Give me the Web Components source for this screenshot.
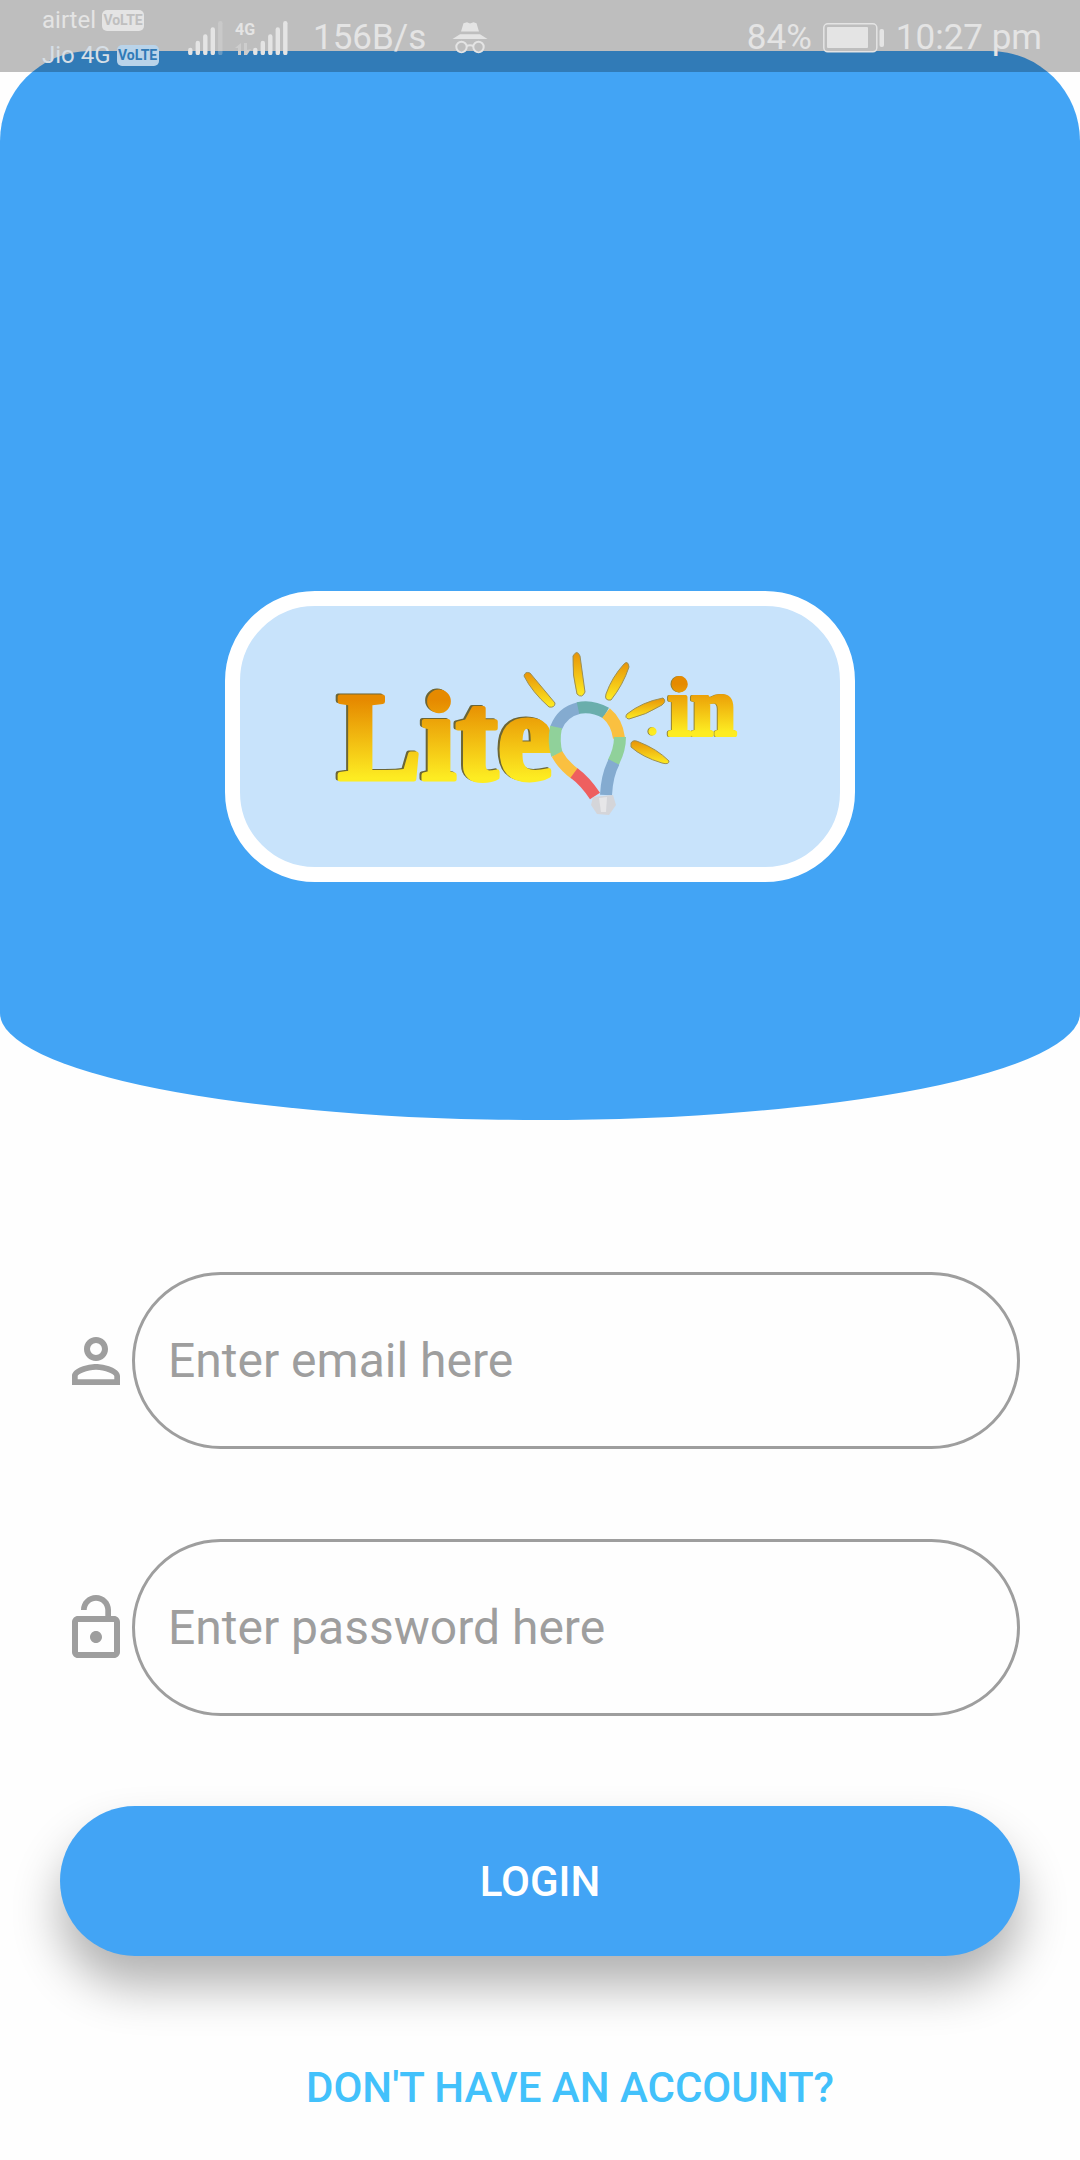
<!DOCTYPE html>
<html lang="en">
<head>
<meta charset="utf-8">
<meta name="viewport" content="width=device-width, initial-scale=1">
<title>Lite.in</title>
<style>
  body { margin: 0; background: #fefefe; font-family: Roboto, "Liberation Sans", sans-serif; }
</style>
</head>
<body>
<login-page></login-page>

<script>
const define = (name, html, setup) => {
  const template = document.createElement('template');
  template.innerHTML = html;
  customElements.define(name, class extends HTMLElement {
    constructor() {
      super();
      this.attachShadow({ mode: 'open' }).append(template.content.cloneNode(true));
    }
    connectedCallback() { if (setup) setup(this, this.shadowRoot); }
  });
};

/* Signal strength bars; level = number of lit bars */
define('signal-bars', `
  <style>
    :host { display: block; }
    svg { display: block; }
    .off { opacity: .3; }
  </style>
  <svg width="35" height="34" viewBox="0 0 35 34" stroke="currentColor" stroke-width="4.4" stroke-linecap="round">
    <path d="M2.3 29v3"/><path d="M9.8 22v10"/><path d="M17.3 15.500v16.500"/><path d="M24.800 8.500v23.500"/><path d="M32.300 2.300v29.700"/>
  </svg>`, (host, root) => {
    const level = Number(host.getAttribute('level'));
    root.querySelectorAll('path').forEach((bar, i) => bar.classList.toggle('off', i >= level));
  });

define('carrier-line', `
  <style>
    :host { display: flex; align-items: center; gap: 6px; height: 35px; font-size: 24px; line-height: 35px; }
    .badge { box-sizing: border-box; width: 42px; height: 21px; border-radius: 5px; background: currentColor; text-align: center; }
    .badge span { display: block; font-size: 14px; line-height: 21px; font-weight: 700; color: var(--cut, #bfbfbf); }
  </style>
  <slot></slot><div class="badge"><span>VoLTE</span></div>`);

define('status-bar', `
  <style>
    :host { position: absolute; inset: 0 0 auto 0; box-sizing: border-box; height: 72px; padding: 3px 38px 0 42px;
      display: flex; align-items: center; justify-content: space-between;
      background: rgba(0,0,0,.25); color: #e4e4e4; font-size: 35px; line-height: 42px; }
    .side { display: flex; align-items: center; }
    .carriers { width: 146px; }
    .jio { --cut: #307ab7; color: #b9d3e9; }
    .jio span { color: #d6dfe6; }
    .network { width: 18px; margin-left: 12px; font-size: 16px; line-height: 18px; font-weight: 700; }
    .network svg { display: block; }
    .speed { margin: 0 26px 0 25px; }
    .right { gap: 11px; }
    svg { display: block; }
  </style>
  <div class="side">
    <div class="carriers">
      <carrier-line>airtel</carrier-line>
      <carrier-line class="jio"><span>Jio 4G</span></carrier-line>
    </div>
    <signal-bars level="4"></signal-bars>
    <div class="network">4G
      <svg width="18" height="16" viewBox="0 0 18 16" fill="#cdcdcd"><path d="M6 4v12H3v-7H0zM9 4h3v7l4-1-4 6H9z"/></svg>
    </div>
    <signal-bars level="5"></signal-bars>
    <div class="speed">156B/s</div>
    <svg width="36" height="32" viewBox="0 0 36 32" fill="currentColor">
      <path d="M9 9.500 11.500 1.200 15 .2 18 1.500 21.500 .2 24.500 1.200 27 9.500z"/>
      <path d="M.5 17 8 12.200h20L35.500 17z"/>
      <g fill="none" stroke="currentColor" stroke-width="2"><circle cx="9.500" cy="25" r="5.200"/><circle cx="26.500" cy="25" r="5.200"/><path d="M14.500 24q3.500-1.500 7 0"/></g>
    </svg>
  </div>
  <div class="side right">
    <div>84%</div>
    <svg width="62" height="30" viewBox="0 0 62 30">
      <rect x=".8" y=".8" width="53" height="28" rx="4" fill="none" stroke="currentColor" stroke-width="1.500"/>
      <rect x="4" y="4" width="41" height="21" rx="1" fill="currentColor"/>
      <rect x="56.500" y="6" width="4.500" height="18" rx="2" fill="currentColor"/>
    </svg>
    <div>10:27 pm</div>
  </div>`);

define('brand-logo', `
  <style>
    :host { display: block; }
    svg { display: block; width: 100%; height: auto; }
    text { font-family: "Liberation Serif", serif; font-weight: 700; stroke-linejoin: round; filter: drop-shadow(-2px -1px 0 #6c6636); }
    .tld { filter: drop-shadow(-1px 0 0 #8f8138); }
  </style>
  <svg viewBox="240 606 600 261" role="img" aria-label="Lite.in">
    <defs>
      <linearGradient id="word" gradientUnits="userSpaceOnUse" x1="0" y1="700" x2="0" y2="778"><stop offset="0" stop-color="#e68a00"/><stop offset="1" stop-color="#fdec22"/></linearGradient>
      <linearGradient id="tld" gradientUnits="userSpaceOnUse" x1="0" y1="684" x2="0" y2="732"><stop offset="0" stop-color="#e68a00"/><stop offset="1" stop-color="#fdec22"/></linearGradient>
      <linearGradient id="ray" x1="0" y1="0" x2="0" y2="1"><stop offset="0" stop-color="#e89308"/><stop offset="1" stop-color="#fdec22"/></linearGradient>
    </defs>
    <text x="338" y="779" font-size="125" fill="url(#word)" stroke="url(#word)" stroke-width="5">Lite</text>
    <g fill="none" stroke-width="12">
      <path stroke="#84abd0" d="M556 728Q562 712 579 708"/>
      <path stroke="#6aaeac" d="M578 708Q592 705 606 713"/>
      <path stroke="#fac040" d="M606 713Q617 722 619 738"/>
      <path stroke="#90d19a" d="M620 737Q620 750 613 763"/>
      <path stroke="#84abd0" d="M614 762Q607 775 606 795"/>
      <path stroke="#90d19a" d="M556 727Q553 742 557 755"/>
      <path stroke="#fac040" d="M557 754Q563 765 575 774"/>
      <path stroke="#ee5f5f" d="M574 773Q585 781 595 796"/>
    </g>
    <path fill="#d4d5d9" d="M593 797 613 795 616 805 609 815 597 814 591 805z"/>
    <path fill="#e6e6e8" d="M599 798 607 797 606 812 601 812z"/>
    <g fill="url(#ray)" stroke="#9c8f55">
      <path d="M524 676q1-5 6-3l25 30q0 5-6 4-17-15-25-31z"/>
      <path d="M573 656q4-7 7 0l5 36q-3 7-8 2-5-19-4-38z"/>
      <path d="M624 664q4-4 5 3-6 18-18 33-7 1-5-6 6-17 18-30z"/>
      <path d="M627 714q15-12 36-16 4 3-1 7-16 10-33 14-5-1-2-5z"/>
      <path d="M631 743q2-4 8-1 18 7 30 19 0 4-7 2-20-6-31-16z"/>
    </g>
    <text class="tld" x="647" y="735" font-size="82" fill="url(#tld)" stroke="url(#tld)" stroke-width="4"><tspan font-size="44" stroke-width="1">.</tspan><tspan dx="10">in</tspan></text>
  </svg>`);

define('hero-panel', `
  <style>
    :host { display: block; margin-top: 51px; padding: 540px 225px 238px; background: #42a4f5;
      border-radius: 90px 90px 50% 50% / 90px 90px 107px 107px; }
    .card { border: 15px solid #fff; border-radius: 90px; background: #c8e3fb; }
  </style>
  <div class="card"><slot></slot></div>`);

define('icon-field', `
  <style>
    :host { display: flex; align-items: center; color: #9e9e9e; }
    label, svg { display: block; width: 72px; height: 72px; }
    input { box-sizing: border-box; flex: 1; min-width: 0; height: 177px; padding: 0 33px; border: 3px solid #9e9e9e;
      border-radius: 90px; background: none; outline: none; font: inherit; font-size: 48px; color: #212121; }
    input::placeholder { color: #9e9e9e; opacity: 1; }
  </style>
  <label for="field"><slot></slot></label>
  <input id="field">`, (host, root) => {
    const input = root.querySelector('input');
    input.type = host.getAttribute('type');
    input.placeholder = host.getAttribute('placeholder');
    input.setAttribute('aria-label', host.getAttribute('placeholder'));
  });

define('raised-button', `
  <style>
    :host { display: block; }
    button { display: block; width: 100%; height: 150px; border: 0; border-radius: 75px; background: #42a4f5; color: #fff;
      font: inherit; font-size: 42px; font-weight: 500; box-shadow: 0 30px 48px rgba(0,0,0,.3); cursor: pointer; }
  </style>
  <button type="button"><slot></slot></button>`);

define('text-link', `
  <style>
    :host { display: flex; justify-content: center; }
    a { font-size: 42px; line-height: 144px; font-weight: 500; color: #42c1fb; text-decoration: none; }
  </style>
  <a href="#signup"><slot></slot></a>`);

define('login-page', `
  <style>
    :host { display: flow-root; position: relative; }
    form { display: flex; flex-direction: column; gap: 90px; padding: 152px 60px 60px; }
    text-link { padding-left: 60px; }
    svg { display: block; width: 72px; height: 72px; }
  </style>
  <hero-panel><brand-logo></brand-logo></hero-panel>
  <form>
    <icon-field type="email" placeholder="Enter email here">
      <svg viewBox="0 0 24 24" fill="currentColor"><path d="M12 6a2 2 0 1 1 0 4 2 2 0 0 1 0-4m0 8.900c2.970 0 6.100 1.460 6.100 2.100v1.100H5.900V17c0-.64 3.130-2.100 6.100-2.100M12 4C9.790 4 8 5.790 8 8s1.790 4 4 4 4-1.790 4-4-1.790-4-4-4zm0 9c-2.670 0-8 1.340-8 4v3h16v-3c0-2.660-5.330-4-8-4z"/></svg>
    </icon-field>
    <icon-field type="password" placeholder="Enter password here">
      <svg viewBox="0 0 24 24" fill="currentColor"><path d="M12 17c1.100 0 2-.9 2-2s-.9-2-2-2-2 .9-2 2 .9 2 2 2zm6-9h-1V6c0-2.760-2.240-5-5-5S7 3.240 7 6h1.900c0-1.710 1.390-3.100 3.100-3.100 1.710 0 3.100 1.390 3.100 3.100v2H6c-1.100 0-2 .9-2 2v10c0 1.100.9 2 2 2h12c1.100 0 2-.9 2-2V10c0-1.100-.9-2-2-2zm0 12H6V10h12v10z"/></svg>
    </icon-field>
    <raised-button>LOGIN</raised-button>
  </form>
  <text-link>DON'T HAVE AN ACCOUNT?</text-link>
  <status-bar></status-bar>`);
</script>
</body>
</html>
